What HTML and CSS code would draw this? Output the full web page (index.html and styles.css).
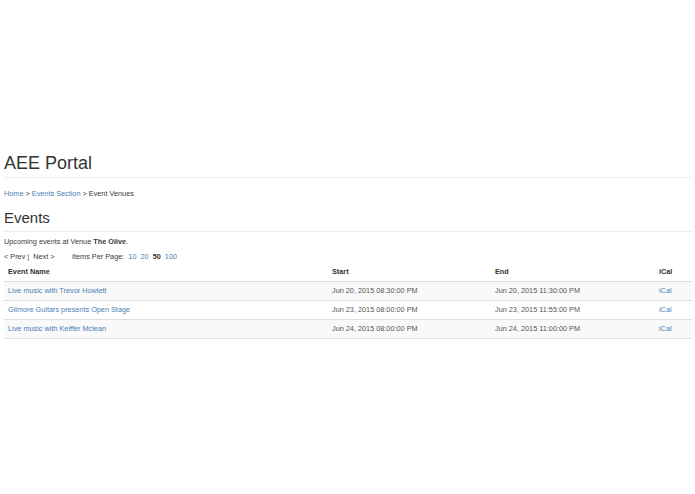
FILE: index.html
```html
<!DOCTYPE html>
<html>
<head>
<meta charset="utf-8">
<title>AEE Portal</title>
<link rel="stylesheet" href="styles.css">
</head>
<body>
<div class="container">
  <div class="page-header first">
    <h1 class="title">AEE Portal</h1>
  </div>
  <div class="breadcrumb">
    <a href="#">Home</a> &gt; <a href="#">Events Section</a> &gt; Event Venues
  </div>
  <div class="page-header second">
    <h2 class="subtitle">Events</h2>
  </div>
  <p class="intro">Upcoming events at Venue <strong>The Olive</strong>.</p>
  <div class="pager">
    <span class="nav">&lt; Prev |&nbsp; Next &gt;</span>
    <span class="per-page">Items Per Page: <a href="#">10</a> <a href="#">20</a> <strong>50</strong> <a href="#">100</a></span>
  </div>
  <table class="events">
    <thead>
      <tr>
        <th class="c-name">Event Name</th>
        <th class="c-start">Start</th>
        <th class="c-end">End</th>
        <th class="c-ical">iCal</th>
      </tr>
    </thead>
    <tbody>
      <tr>
        <td><a href="#">Live music with Trevor Howlett</a></td>
        <td>Jun 20, 2015 08:30:00 PM</td>
        <td>Jun 20, 2015 11:30:00 PM</td>
        <td><a href="#">iCal</a></td>
      </tr>
      <tr>
        <td><a href="#">Gilmore Guitars presents Open Stage</a></td>
        <td>Jun 23, 2015 08:00:00 PM</td>
        <td>Jun 23, 2015 11:55:00 PM</td>
        <td><a href="#">iCal</a></td>
      </tr>
      <tr>
        <td><a href="#">Live music with Keiffer Mclean</a></td>
        <td>Jun 24, 2015 08:00:00 PM</td>
        <td>Jun 24, 2015 11:00:00 PM</td>
        <td><a href="#">iCal</a></td>
      </tr>
    </tbody>
  </table>
</div>
</body>
</html>
```

FILE: styles.css
```css
html, body {
  margin: 0;
  padding: 0;
  background: #fff;
}
body {
  font-family: "Liberation Sans", Arial, Helvetica, sans-serif;
  font-size: 7.3px;
  line-height: 10px;
  color: #3a3a3a;
}
a {
  color: #4a80b8;
  text-decoration: none;
}
.container {
  padding: 153px 3px 0 4px;
}
.page-header {
  border-bottom: 1px solid #eee;
  padding-bottom: 4px;
}
.page-header.first {
  margin-bottom: 11px;
}
.page-header.second {
  margin-top: 10px;
  padding-bottom: 5px;
  margin-bottom: 5px;
}
.title {
  margin: 0;
  font-size: 18px;
  line-height: 20px;
  font-weight: normal;
  color: #333;
}
.subtitle {
  margin: 0;
  font-size: 15px;
  line-height: 17px;
  font-weight: normal;
  color: #333;
}
.breadcrumb {
  margin: 0;
}
.intro {
  margin: 0 0 5px 0;
}
.pager {
  display: flex;
}
.nav {
  width: 68px;
}
.per-page a, .per-page strong {
  margin-left: 2px;
}
.per-page strong {
  color: #333;
}
.events {
  width: 688px;
  border-collapse: collapse;
  border-spacing: 0;
}
.events th, .events td {
  padding: 4px;
  line-height: 10px;
  text-align: left;
  vertical-align: top;
}
.events th {
  font-weight: bold;
  border-bottom: 1px solid #ddd;
  padding-top: 5px;
  padding-bottom: 4px;
  color: #333;
}
.events td {
  border-top: 1px solid #ddd;
  color: #555;
}
.events td a {
  color: #4a80b8;
}
.events tbody tr:last-child td {
  border-bottom: 1px solid #ddd;
}
.events tbody tr:nth-child(odd) td {
  background: #f9f9f9;
}
.c-name { width: 316px; }
.c-start { width: 155px; }
.c-end { width: 156px; }
.c-ical { width: 29px; }
```
